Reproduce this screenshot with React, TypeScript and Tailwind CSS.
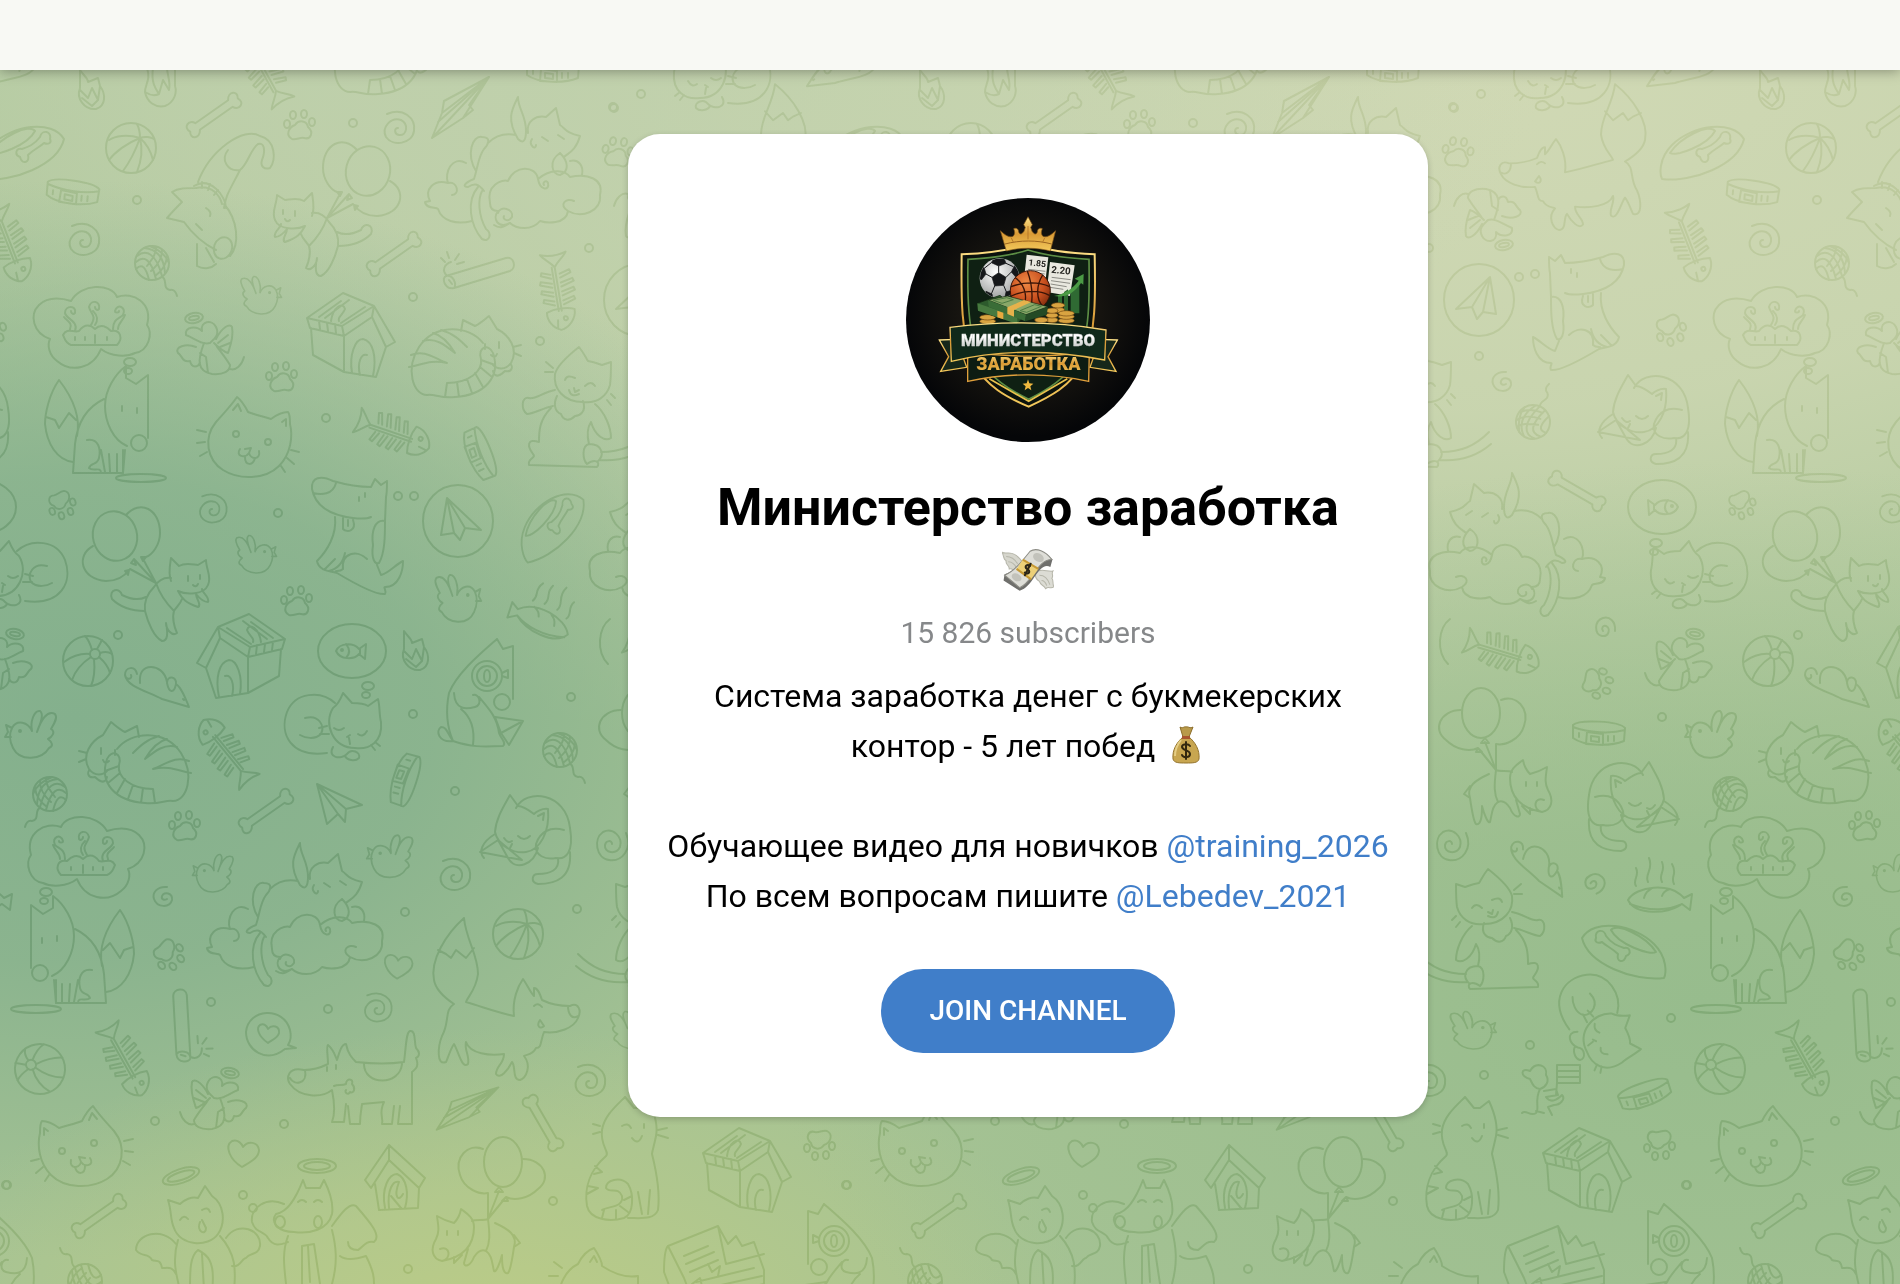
import React from 'react';

/* Line drawings for the wallpaper, each one drawn around its own centre */
const motifs: Record<string, React.ReactNode> = {
  dot: <circle r="4" />,
  bone: <path d="M-20 -4C-23 -11 -33 -8 -29 0C-34 6 -25 12 -20 4L20 4C23 11 33 8 29 0C34 -6 25 -12 20 -4Z" />,
  paw: (
    <>
      <path d="M-7 13C-14 9 -10 1 -4 -1C0 -7 8 -5 9 1C15 6 12 14 5 12C1 11 -2 14 -7 13Z" />
      <ellipse cx="-12" cy="-2" rx="3" ry="4" />
      <ellipse cx="-6" cy="-11" rx="3" ry="4" />
      <ellipse cx="5" cy="-12" rx="3" ry="4" />
      <ellipse cx="13" cy="-4" rx="3" ry="4" />
    </>
  ),
  spiral: <path d="M-12 -14C4 -21 17 -10 15 3C13 16 -6 19 -13 9C-18 -1 -8 -11 2 -8C10 -4 8 8 0 7C-5 6 -5 0 -1 0" />,
  swirl: <path d="M4 -10C-6 -11 -11 -4 -9 2C-6 11 7 11 9 3C10 -4 1 -6 -1 -1C-2 2 1 4 4 2" />,
  ball: (
    <>
      <circle r="25" />
      <circle cx="7" cy="-7" r="5" />
      <path d="M4 -11C2 -18 0 -22 -3 -25M9 -12C12 -17 13 -19 14 -21M12 -8C18 -10 21 -9 24 -7M2 -7C-8 -8 -18 -4 -24 1M3 -4C-6 2 -13 10 -16 19M6 -2C7 8 6 18 3 25M11 -4C18 2 21 8 22 12" />
    </>
  ),
  beachBall: (
    <>
      <circle r="25" />
      <path d="M9 -10C-4 -14 -16 -12 -22 -8M9 -10C-4 -5 -16 4 -22 12M9 -10C4 4 -2 15 -8 23M9 -10C12 2 10 14 6 24M9 -10C16 -4 20 4 22 12M9 -10C14 -12 20 -11 23 -9M9 -10C9 -16 8 -20 6 -24" />
    </>
  ),
  collar: (
    <path d="M-26 -8C-20 -14 20 -12 26 -5L25 8C10 14 -15 13 -26 5ZM-26 -6C-10 0 12 1 26 -3M-12 -1L4 1L4 12L-13 11ZM-8 3L0 4L0 9L-8 8ZM9 3v5M15 3v5M-20 0v4" />
  ),
  fishbone: (
    <>
      <path d="M-24 0C-30 -4 -33 -10 -38 -13C-35 -4 -35 4 -38 13C-33 10 -30 4 -24 0L20 -1M-24 3L20 2" />
      <path d="M-17 -4L-20 -14L-17 -15L-13 -4M-8 -4L-11 -16L-8 -17L-4 -4M1 -4L-2 -16L1 -17L5 -4M10 -4L7 -15L10 -16L14 -4M-17 5L-20 14L-17 15L-13 5M-8 5L-11 16L-8 17L-4 5M1 5L-2 16L1 17L5 5M10 5L7 15L10 16L14 5" />
      <path d="M20 -14C31 -14 38 -5 39 2C36 10 28 15 20 14C17 6 17 -6 20 -14ZM37 5L29 4" />
      <circle cx="28" cy="-4" r="2" />
    </>
  ),
  yarn: (
    <>
      <circle r="17" />
      <path d="M-15 -7C-6 -14 4 -10 10 13M-16 -1C-8 -8 -1 -4 4 16M-16 6C-10 0 -6 4 -3 17M-8 -15C4 -14 12 -6 13 10M-2 -17C8 -13 14 -8 17 0M-5 3C2 -6 4 -10 4 -16M-1 8C8 0 10 -6 10 -13M3 13C10 8 14 2 15 -6M10 14C16 16 10 26 18 27C22 26 24 29 25 33" />
    </>
  ),
  bird: (
    <>
      <path d="M-20 -6C-15 -15 -4 -12 0 -3C-2 -12 2 -24 8 -23C12 -20 9 -12 5 -2C9 -14 15 -24 23 -20C26 -16 22 -10 19 -5C24 -2 20 3 16 5C20 8 22 12 17 14C10 26 -12 28 -19 14C-22 8 -23 0 -20 -6L-26 -9L-24 -2L-27 3L-21 3" />
      <circle cx="-12" cy="-3" r="1" />
    </>
  ),
  plane: <path d="M-22 -19L23 2L7 6L6 19L-1 11L-12 21ZM-22 -19L-1 11M-22 -19L7 6" />,
  dart: <path d="M28 -31L-17 -7L-19 5L-29 30L2 10L12 2L8 -3ZM28 -31L-19 5M28 -31L-23 14M28 -31L-29 30M28 -31L2 10" />,
  mouse: (
    <path d="M-20 -13C-22 -22 -32 -20 -32 -12C-31 -6 -24 -8 -26 -12M-32 -12C-30 0 -10 4 5 12L32 20C28 10 24 0 19 -3C20 -11 10 -12 10 -4C12 6 17 7 19 -3M10 -5C8 -16 0 -20 -6 -20C-14 -20 -18 -14 -17 -4M26 12l1 1" />
  ),
  balloonCat: (
    <>
      <ellipse cx="-31" cy="-39" rx="22" ry="25" transform="rotate(-15 -31 -39)" />
      <path d="M-20 -60C-6 -76 14 -66 14 -42C14 -30 6 -20 0 -18M-53 -29C-70 -20 -66 4 -40 6C-30 6 -22 2 -17 -5M-12 -16L10 8M-4 -18L10 8M-16 -6L10 8M-12 -16l-3 4l5 2zM-17 -5l-4 1l3 4zM0 -18l-5 0l2 4z" />
      <path d="M25 6C22 -2 24 -10 25 -17L33 -9C40 -13 48 -10 52 -10L60 -15C60 -6 66 2 62 10C58 20 40 20 32 16M25 3C18 2 12 6 8 12C0 20 -2 28 -1 36M32 16C36 24 40 28 52 32C56 30 50 24 50 19M50 19C54 24 58 27 62 27C64 22 56 18 56 14M10 8C14 20 22 30 28 36C26 42 28 52 31 58C26 62 20 54 20 48C22 58 22 66 16 66C8 62 2 48 -1 36C-18 36 -28 30 -34 24C-38 14 -26 12 -24 20C-16 24 -8 26 0 22M28 36C30 32 34 30 36 24" />
      <path d="M42 1v5M54 0v4M47 10q3 3 5 -1" />
    </>
  ),
  catFace: (
    <>
      <path d="M-12 -39C-18 -30 -26 -22 -33 -14C-46 2 -42 24 -26 34C-10 44 16 44 30 30C42 18 44 0 41 -12C41 -18 41 -22 39 -24C32 -24 26 -20 22 -17C12 -20 4 -22 -1 -24C-4 -30 -8 -36 -12 -39ZM-16 -26L-11 -32L-8 -25M33 -14L37 -17L37 -10" />
      <path d="M-9 13C-14 20 -4 23 0 17C2 24 12 24 10 15M-4 13L2 12L0 17M-4 21C-4 30 4 30 6 22M-43 -4L-52 -6M-44 6L-52 7M-42 16L-49 20M42 14L50 16M38 22L45 28M32 30L36 36" />
      <circle cx="-13" cy="-2" r="3" />
      <circle cx="19" cy="6" r="3" />
    </>
  ),
  sleepCat: (
    <path d="M2 -23C-12 -36 -38 -34 -46 -14C-54 8 -42 32 -6 27M0 -18C6 -22 8 -28 10 -33L19 -23C26 -23 32 -22 35 -20L45 -27C47 -20 46 -12 48 -4C50 16 36 24 22 22C0 22 -10 -2 0 -18ZM-28 -8C-14 -12 -8 0 -12 8C-18 14 -28 12 -33 9M-14 2L-6 0M-13 8L-4 8M1 2Q6 6 11 2M25 8Q30 12 34 5M14 11L17 9M16 12L17 18M0 21C-6 32 8 34 14 28C18 22 28 26 26 32C22 36 14 34 12 30M38 19L42 24M42 16L47 20" />
  ),
  thought: (
    <>
      <ellipse cx="-2" cy="0" rx="6" ry="4" />
      <ellipse cx="-4" cy="9" rx="4" ry="3" />
    </>
  ),
  stripedCat: (
    <path d="M18 -14C4 -32 -30 -34 -46 -10C-60 12 -52 38 -38 38C-32 36 -24 42 -10 40C20 38 36 20 28 -4C24 -14 12 -10 16 2C18 14 4 26 -18 26L-20 40M-8 25L-6 40M2 22L7 36M10 16L18 30M15 10L27 20M16 3L30 8M-54 -2C-40 -8 -30 2 -18 6C-34 2 -44 8 -56 10M-42 -16C-30 -20 -20 -12 -10 -4C-16 -14 -24 -22 -32 -24M-24 -27C-12 -24 -4 -16 2 -10M-4 -26L-2 -37L10 -31C16 -34 20 -38 24 -41L32 -28C44 -22 54 -8 46 6C40 14 32 12 28 8M20 -13v5M34 -15v6M26 -2q4 4 6 -1M28 14C30 22 36 18 40 14C48 16 48 8 45 7M48 -10L56 -12M49 -4L56 -1" />
  ),
  foxSit: (
    <>
      <path d="M-38 -40C-48 -26 -52 -6 -52 4C-50 24 -40 40 -24 42M-38 -40C-24 -22 -16 -4 -20 16M-51 -3L-42 0L-38 8L-28 -7L-21 0M7 -21C-12 -12 -20 6 -22 24L-24 53L26 53L28 30M30 26C16 20 8 2 8 -14C8 -30 18 -46 29 -54L29 -42L39 -36L51 -45L51 18" />
      <path d="M-10 20C2 18 4 30 2 38C0 46 -6 42 -8 48C-4 52 4 46 4 53M4 30L8 52M12 34L13 52M20 34L20 52M26 30L26 53" />
      <circle cx="42" cy="23" r="8" />
      <path d="M25 -14v5M40 -12v5" />
    </>
  ),
  dish: <ellipse rx="25" ry="4" />,
  cloud: (
    <path d="M-22 -24C-12 -42 18 -42 24 -28C40 -34 60 -22 54 0C60 8 56 26 42 28C34 32 18 32 8 24C0 44 -22 48 -36 36C-44 30 -46 20 -43 14C-60 8 -64 -10 -54 -20C-44 -30 -28 -26 -22 -24ZM-18 6C-14 -4 -27 -6 -28 -12C-28 -20 -16 -20 -18 -12C-20 -10 -22 -12 -22 -14M-23 4C-20 -2 -26 -4 -29 -8M-2 0C4 -10 -2 -10 -4 -18C-2 -26 8 -24 6 -16C4 -14 2 -16 2 -18M2 0C6 -6 4 -10 0 -14M20 4C20 -6 26 -6 30 -10C34 -18 24 -22 22 -14C22 -12 26 -12 26 -14M25 4C25 -2 30 -4 32 -10M-30 10C-26 2 -20 8 -14 6C-8 -2 -2 0 2 4C8 -2 14 2 18 6C28 4 30 14 24 20L-22 20C-28 18 -28 14 -30 10ZM-18 12v3M-8 12v3M2 10v8M14 12v3" />
  ),
  cloudCat: (
    <path d="M-22 28C-26 10 -10 4 -4 6C2 -10 24 -10 26 4C40 -8 54 -4 58 2C76 -2 92 4 88 20C90 36 70 44 56 36C54 50 34 48 28 46C20 56 4 54 -2 48C-14 54 -20 44 -14 36C-20 36 -22 32 -22 28ZM26 4C28 16 38 16 36 8C34 4 30 8 32 10M-14 38C-12 30 2 34 0 42C-4 48 -10 44 -8 41M56 36C46 30 54 22 62 26M-46 -12C-60 -20 -68 -2 -64 8C-78 4 -88 14 -82 26L-87 27C-86 34 -76 32 -74 34C-70 46 -56 50 -40 46M-64 8C-54 6 -52 20 -60 20M-18 50C-12 54 -8 52 -2 48M-36 -4C-46 -20 -40 -40 -30 -38C-20 -38 -24 -30 -28 -26C-34 -18 -34 -8 -38 4C-48 8 -50 12 -44 12C-38 8 -34 8 -28 16M-24 -32C-16 -40 -6 -42 4 -40M-34 12C-46 26 -42 50 -30 64C-22 68 -20 58 -26 54C-34 40 -34 24 -30 16M16 -42C14 -54 24 -60 34 -58L44 -67L48 -50C54 -46 54 -42 68 -39C64 -24 56 -22 52 -18M6 -36C-6 -56 0 -66 6 -78C6 -66 14 -60 14 -44C14 -32 10 -32 6 -36M48 -22C36 -14 40 0 48 0C58 -4 56 -14 48 -22M58 -14C66 -16 72 -10 70 0M20 -36C16 -30 24 -24 24 -30M30 -38L36 -34M46 -40L52 -36" />
  ),
  house: (
    <path d="M-8 -42L-44 -17L-9 -9L23 -29ZM-44 -17L-41 -7L-7 1L21 -18L23 -29M-9 -9L-7 1M-40 -7L-38 20L-7 37L-7 1M-7 37L25 42L35 12M23 -29L44 7L35 12L21 -18M1 38C-2 20 4 4 12 4C22 6 26 22 22 41M9 40C6 28 10 18 16 20M-32 -18L-10 -34M-26 -17L-2 -35M-20 -14C-18 -28 -8 -34 -6 -26C-8 -20 -14 -18 -12 -14M-4 -16L14 -28M-10 -12L2 -20M-32 -14L-31 -6M-24 -12L-23 -4M-16 -11L-15 -2" />
  ),
  angelMouse: (
    <>
      <ellipse cx="-16" cy="-25" rx="9" ry="5" transform="rotate(-10 -16 -25)" />
      <ellipse cx="-16" cy="-25" rx="5" ry="2" transform="rotate(-10 -16 -25)" />
      <path d="M-24 -8C-26 -16 -14 -18 -8 -12C-10 -22 2 -24 6 -16C10 -8 4 -4 0 0C-8 2 -14 -4 -24 -8ZM6 -4C12 -16 20 -20 22 -16C24 -6 20 4 18 10C12 8 8 4 4 0M8 0L18 -8M10 4L20 0M-14 4C-24 0 -36 4 -32 10C-28 12 -28 20 -20 18C-18 26 -12 24 -10 20M-6 0C-12 16 -14 28 2 31C14 32 20 28 20 22C14 12 8 6 6 2M20 26C26 28 32 22 34 14M-4 14L-10 10M-4 14L-2 30" />
    </>
  ),
  happyCat: (
    <path d="M-40 -46C-40 -36 -40 -30 -39 -23C-36 -12 -26 -4 -12 -6C8 -6 18 -20 16 -34C14 -42 6 -50 -8 -61C-12 -56 -14 -52 -17 -47C-24 -46 -28 -44 -31 -43ZM-12 -7C-16 4 -8 8 -4 8C2 14 8 12 10 6C16 4 18 -4 14 -12M16 -18C28 -16 36 -8 42 -10C50 -12 50 2 44 6C38 6 28 0 18 -2M20 0C32 12 32 24 32 34C44 30 44 38 38 46C34 50 44 50 42 57L-26 59C-30 54 -24 50 -16 56M-24 -4C-34 4 -40 20 -40 30C-34 34 -24 28 -20 14C-16 20 -16 28 -18 36C-32 36 -34 48 -26 54M-18 36C-10 38 -12 52 -16 56M-30 44C-50 44 -64 38 -78 24M-28 52C-50 54 -66 48 -80 36M-24 -22Q-20 -28 -14 -22M-4 -30Q4 -34 6 -28M-8 -18L-4 -16L-3 -20M-8 -14Q0 -10 2 -18M18 -40L25 -46M18 -36L26 -36M-40 -14L-44 -10M-36 -8L-40 -3" />
  ),
  sitDog: (
    <>
      <path d="M-30 -54C-30 -46 -30 -42 -29 -38L-28 -14M-30 -54L-24 -50L-18 -56L-14 -48C0 -48 10 -50 24 -54C36 -60 46 -58 45 -46C42 -30 28 -20 4 -17C-4 -16 -10 -16 -14 -18M21 -52C24 -40 36 -40 44 -42M4 -15C0 -4 10 -2 14 -6L14 -17M9 -15v6M-28 -14C-18 -16 -14 -4 -16 10C-14 24 -18 30 -22 28C-28 18 -28 0 -28 -14M22 -18C20 0 30 16 40 26C38 36 28 36 20 38M12 18C14 28 20 34 28 36M22 24L32 34M-10 24C0 14 16 18 14 34C18 38 24 34 20 38C0 50 -20 60 -28 59C-30 56 -26 52 -28 52C-42 52 -46 36 -46 26C-38 30 -32 38 -24 40L-20 30" />
      <path d="M-8 -42v4M-2 -38v4" />
    </>
  ),
  foxStand: (
    <path d="M-42 -82C-60 -66 -76 -40 -72 -20C-70 -8 -58 0 -52 4M-42 -82C-40 -60 -28 -46 -28 -26C-30 -10 -38 -4 -40 2M-68 -50L-60 -46L-55 -42L-50 -50L-40 -42L-32 -52M-40 2C-20 8 -10 12 8 16C6 0 12 -14 17 -21C22 -14 24 -8 28 -4L28 -12C32 -12 34 -6 36 0C44 4 56 6 64 6C72 2 76 10 72 18C68 28 52 34 38 32C34 42 36 48 30 48C26 56 20 54 18 56M62 6C62 14 66 20 72 16M18 56C26 66 20 78 14 80C6 80 10 66 6 62C2 70 -6 80 -10 74C-10 66 -2 64 -2 54C-16 56 -36 54 -40 42C-42 50 -36 56 -38 64C-44 70 -48 50 -52 44C-56 50 -58 58 -60 62C-70 66 -68 46 -64 36C-56 22 -62 10 -52 4M28 6Q32 2 36 7M34 20C30 26 34 30 38 26Z" />
  ),
  foxScope: (
    <>
      <path d="M16 -54C0 -40 -24 -20 -32 0C-36 20 -34 34 -28 48C-42 50 -46 38 -40 34C-34 34 -34 40 -28 48C-10 54 0 54 22 53C26 50 20 46 18 40M16 -54L22 -44L32 -47L32 6M-2 4C8 16 16 24 18 40M-27 0C-26 18 -14 16 -6 14C2 12 -2 0 -8 2M-20 16C-10 24 -6 36 -8 52M14 24L42 28L28 52L20 40ZM20 40L42 28" />
      <circle cx="21" cy="9" r="8" />
      <circle cx="6" cy="-17" r="15" />
      <circle cx="6" cy="-17" r="10" />
      <ellipse cx="6" cy="-17" rx="3" ry="6" />
      <path d="M21 -20l6 -3v8l-6 -2" />
    </>
  ),
  curledCat: (
    <path d="M-10 -30C0 -50 40 -46 44 -10C48 14 40 22 30 20C20 22 8 18 10 6C14 -6 24 -12 38 -8M44 14C46 40 30 46 12 46C4 44 6 36 12 36C24 36 34 32 32 20M-16 -43C-22 -32 -30 -20 -31 -6C-28 8 -12 16 0 14C14 12 24 -6 22 -29C16 -30 10 -26 8 -24C0 -30 -4 -32 -8 -32ZM-31 -4C-44 4 -48 14 -42 20M-46 14L-4 22L-28 2ZM-28 2L-18 20M-18 20C-10 34 8 26 12 10M-22 0Q-18 6 -14 3M-8 -2Q-2 4 4 -2M-14 6L-16 10M12 -22l6 -3l-1 7" />
  ),
  balloonDog: (
    <>
      <ellipse cx="-15" cy="-43" rx="19" ry="25" />
      <path d="M-35 -46C-56 -46 -64 -26 -50 -16C-40 -6 -26 -4 -18 -8M5 -56C20 -62 34 -48 28 -30C24 -16 8 -10 0 -12M-11 -18l-4 5h8zM-18 -8L0 14M-11 -14L0 14M0 -12L0 14M-18 -8l-2 4l6 0z" />
      <path d="M14 22C14 12 22 8 27 4C28 10 30 14 34 18C42 16 46 14 51 11C50 20 48 26 52 34C58 44 56 54 46 56C24 52 14 40 14 22M48 44C38 40 36 54 46 56M0 14C4 16 12 14 16 16M0 14C-2 30 -2 38 2 46C6 44 10 46 14 52C18 62 24 62 24 58L20 44M-7 18C-20 24 -30 30 -26 42C-24 56 -22 66 -20 68C-14 70 -14 56 -14 50C-12 58 -8 68 -6 66C-4 58 -4 50 2 46M-26 30L-32 38L-26 42M26 50L34 58L34 52M30 26v4M41 26v4" />
    </>
  ),
  standDog: (
    <>
      <path d="M-26 -14C-26 -22 -28 -32 -26 -33C-20 -28 -18 -20 -17 -18C-14 -28 -12 -34 -8 -34C-6 -24 -2 -20 2 -16C20 -14 36 -14 50 -16C52 -30 52 -46 56 -47C62 -48 60 -36 62 -30C66 -26 66 -22 62 -20C66 -10 60 -8 58 -6L58 46L44 46L46 28M-26 -14C-34 -10 -42 -8 -50 -8C-66 -12 -68 0 -64 6C-54 20 -32 20 -22 12C-20 22 -18 34 -22 44L-10 44L-8 26M-6 28L-4 46L6 46C6 36 8 28 8 26L30 24C24 36 30 40 28 46L38 46L40 28M10 -14C10 8 46 8 48 -14M-49 -8C-46 6 -60 8 -64 0" />
      <path d="M-20 8C-16 6 -12 8 -8 6C-8 0 0 0 -2 6C2 10 0 16 -4 14C-6 18 -10 14 -8 12M-27 -11v4M-18 -13v4" />
    </>
  ),
  tabby: (
    <path d="M1 -63C-8 -54 -20 -44 -22 -30C-24 -14 -14 -8 -18 -4C-34 10 -40 28 -37 46C-34 60 -14 62 0 58C10 54 10 34 4 24C-4 16 -18 20 -18 28C-14 34 -6 26 -2 36C0 48 -16 46 -22 50M1 -63L10 -52L16 -52L25 -59C30 -48 34 -34 32 -24C30 -14 28 -8 28 -6C32 10 36 34 34 50C30 60 18 58 4 58M14 32L18 54M26 30L24 54M-29 6L-22 12L-30 14M-36 26L-26 28L-37 34M0 40L8 36M-4 46L4 52M-20 50L-22 58M-8 50L-8 59M-2 -34Q4 -38 7 -32M20 -36v4M8 -22Q14 -14 18 -24M-24 -34L-31 -36M-24 -28L-31 -26M34 -30L43 -32M34 -25L44 -22" />
  ),
  angelCat: (
    <>
      <ellipse cx="-17" cy="-54" rx="19" ry="7" transform="rotate(-18 -17 -54)" />
      <ellipse cx="-17" cy="-54" rx="14" ry="4" transform="rotate(-18 -17 -54)" />
      <path d="M-30 -30C-26 -18 -28 -10 -24 -2C-18 16 10 18 20 4C28 -8 26 -26 14 -34L7 -44L0 -32C-6 -34 -14 -30 -18 -26ZM-22 14C-36 -4 -62 4 -62 20C-56 28 -50 22 -46 30C-42 32 -38 28 -36 38C-30 38 -26 36 -22 44M28 8C40 -10 64 0 62 16C60 26 52 22 48 28C44 28 42 38 34 36M-20 10C-26 30 -22 44 -18 60M22 6C38 24 38 40 36 60M-8 60C-8 40 -8 26 0 20C8 24 18 30 14 60M4 24L6 60M-18 -10Q-14 -16 -10 -11M4 -20Q10 -24 12 -18M2 -8C-2 2 8 6 8 -2L4 -10" />
    </>
  ),
  angelDog: (
    <>
      <ellipse cx="7" cy="-56" rx="19" ry="7" />
      <ellipse cx="7" cy="-56" rx="13" ry="4" />
      <path d="M-7 -42C-14 -24 -22 -10 -34 -8C-40 0 -32 10 -16 10C0 12 18 8 22 -8C24 -20 18 -34 14 -42L10 -34L-4 -34ZM-26 -18C-44 -26 -60 -14 -58 0C-54 12 -46 8 -42 16C-36 26 -28 22 -22 20M22 4C32 -10 40 -20 46 -16C60 0 72 14 64 20C56 18 52 26 48 28C42 28 38 26 38 20M30 34C38 40 50 36 56 34C64 50 64 56 64 62M-22 14C-28 30 -26 44 -24 62M22 8C26 24 28 40 22 62M-8 62L-8 24L4 22L10 62M-2 24L0 60M-12 -20Q-8 -24 -4 -20M4 -20Q8 -24 12 -20" />
      <ellipse cx="-30" cy="0" rx="5" ry="6" />
      <ellipse cx="8" cy="0" rx="4" ry="6" />
    </>
  ),
  frontHouse: (
    <path d="M-6 -33L-30 2L-24 10L-6 -18L24 10L30 0ZM-6 -33L-6 -18M-20 6L-16 32L23 30L24 10M-10 30C-14 10 -6 -4 2 -4C12 0 14 16 10 30M-6 30C-8 12 -2 2 4 4M-4 18L6 30M4 4C-2 20 4 24 8 16" />
  ),
  circlePlane: (
    <>
      <ellipse rx="35" ry="36" />
      <path d="M-11 -23L23 9L7 7L2 19L-4 12L-17 14ZM-11 -23L-4 12M-11 -23L7 7" />
    </>
  ),
  circleFish: (
    <>
      <ellipse rx="34" ry="27" />
      <path d="M-16 0C-12 -9 2 -8 7 -2L14 -7L13 8L7 3C2 9 -12 9 -16 0ZM-6 -7C-2 -2 -2 3 -6 7M8 -2v5" />
      <circle cx="-10" cy="-1" r="1" />
    </>
  ),
  steamFish: (
    <path d="M-32 10C-24 -4 10 -8 24 8L32 4L30 20L22 14C8 24 -24 26 -32 10ZM-30 14C-10 22 10 20 22 14M-16 8C-14 0 -12 2 -8 -2M2 6C4 0 8 0 10 -1M-24 -4C-28 -10 -20 -14 -24 -22M-12 -8C-16 -16 -6 -20 -11 -32M2 -8C-2 -16 6 -18 2 -28M14 -6C10 -14 18 -16 12 -26" />
  ),
  bowl: (
    <path d="M-42 -12C-30 -32 10 -26 30 -6C44 8 42 24 40 28C10 32 -36 14 -42 -12ZM-13 -20C-8 -28 22 -14 32 2C26 6 -6 -6 -13 -20M-28 -12C-30 -20 -20 -22 -18 -14C-12 -6 -6 -4 0 -2C6 -4 8 4 2 6C0 14 -8 12 -6 4C-12 -2 -18 -4 -22 -8C-26 -6 -30 -8 -28 -12Z" />
  ),
  popcorn: (
    <path d="M-12 -20C-8 -14 -4 -12 -4 -8L6 -12L8 -4C14 4 14 16 4 19C-8 20 -16 8 -12 -2ZM-12 0L-4 8L0 -2L6 10L8 -4M-10 8L0 16L6 10" />
  ),
  egg: <path d="M-14 -20C-10 -8 -16 -4 -16 4C-14 14 -6 20 4 18C14 14 16 4 14 -2L14 -22M-8 -20C-10 -6 -6 0 -2 6L2 -8L8 2C10 -6 6 -14 6 -20M-16 4C-10 8 -6 8 -2 6" />,
  heart: <path d="M-2 13C-14 6 -20 -8 -12 -13C-6 -15 -2 -10 -1 -7C4 -14 14 -12 15 -4C15 4 6 8 -2 13Z" />,
  heartBubble: (
    <>
      <path d="M15 15C-4 30 -24 16 -24 -2C-22 -26 14 -28 20 -4C22 4 20 8 18 11L26 14L15 15" />
      <path d="M-2 9C-12 2 -14 -6 -10 -9C-6 -11 -3 -8 -2 -5C2 -10 10 -8 9 -1C8 4 2 6 -2 9Z" />
    </>
  ),
  firecracker: (
    <path d="M-33 2L27 -16C35 -18 38 -6 31 -3L-25 14C-34 16 -38 4 -33 2C-26 0 -22 10 -25 14M-32 2C-38 -4 -34 -10 -28 -12M-30 -16L-32 -22M-24 -14L-20 -20M-22 -10L-15 -12M-34 -12L-38 -16M-30 6l3 4" />
  ),
  hangingDog: (
    <>
      <path d="M-22 -18C-10 -50 24 -74 40 -64C56 -60 56 -40 50 -32C44 -30 40 -34 42 -40C46 -50 44 -58 38 -56C30 -50 28 -36 20 -30C8 -28 0 -40 8 -50M20 -30C10 -10 6 -6 4 8M-26 -14C-10 -24 6 -4 6 8M-24 -12C-8 -16 0 -4 2 4M-18 -18v6M-10 -16l-2 6M-2 -10l-4 5M-24 -12C-34 -12 -42 -12 -48 -8L-38 2C-44 8 -48 12 -53 18L-36 22C-26 36 -16 44 -4 50M4 4C18 20 20 44 10 56M-23 44L-23 66C-16 70 -8 68 -4 64M-14 48L-6 62" />
      <ellipse cx="3" cy="48" rx="9" ry="11" transform="rotate(20 3 48)" />
      <path d="M-24 24l6 6M-14 8q6 4 4 8" />
    </>
  ),
  flagMouse: (
    <path d="M-20 -12C-30 -14 -30 -24 -20 -20C-14 -30 -2 -26 -4 -16C0 -10 -4 -4 -10 -2C-16 -2 -18 -8 -20 -12ZM7 -26L30 -26L30 -8L7 -8ZM7 -20h23M7 -14h23M7 -8L6 4M-6 0L6 -2L8 4L-4 6M-10 -2C-16 10 -10 18 -14 22C-20 26 -24 18 -28 22M-4 6C0 12 6 10 12 4C16 8 10 14 4 14L-2 16L2 24M-14 20L-6 22" />
  ),
  box: (
    <path d="M-46 -18L4 -38L14 -20L22 -28L28 -18L40 -22L50 6L50 40L-38 40L-50 8C-50 0 -50 -14 -46 -18ZM-46 -18L-30 14L-20 40M4 -38L12 0L50 -10M-30 -8L-6 -18M-28 0L0 -12M-24 8L4 -4M-18 18L40 4M-16 26L48 12M-14 34L50 20M-6 0L-2 8L6 2L4 12M-22 20l8 -6l2 8" />
  ),
  catTop: <path d="M-36 40C-36 20 -28 6 -16 0C-12 -8 -6 -14 0 -16C4 -10 8 -4 8 2C20 10 32 14 44 12L44 30M-4 -2l4 -6l3 6M-32 4l-8 -6M-36 12h-9" />,
  ring: <path d="M10 -23C-2 -14 -4 10 8 22" />,
};

type Placement = [name: string, x: number, y: number, rotate?: number, scaleX?: number, scaleY?: number];

/* One repeat of the wallpaper is 840 wide */
const placements: Placement[] = [
  ['mouse', 842, 72, 10, -1], ['popcorn', 92, 90], ['egg', 161, 88], ['fishbone', 264, 70, 60, -1], ['stripedCat', 388, 54], ['collar', 553, 70],
  ['dart', 461, 108], ['bone', 214, 115, -35], ['paw', 299, 126], ['dot', 353, 123], ['dot', 137, 200], ['dot', 614, 108],
  ['dot', 413, 297], ['dot', 326, 418], ['dot', 540, 341], ['dot', 589, 248], ['spiral', 399, 128], ['bowl', 22, 151, 0, -1],
  ['beachBall', 131, 148], ['collar', 73, 192, 5], ['hangingDog', 220, 200], ['balloonCat', 337, 210, 0, -1], ['cloudCat', 512, 175],
  ['paw', 617, 153, 10], ['fishbone', 10, 244, 70], ['spiral', 84, 240], ['yarn', 152, 263], ['bone', 394, 254, -35],
  ['firecracker', 479, 274], ['fishbone', 558, 291, 82], ['bird', 260, 295, 0, -0.8, 0.8], ['cloud', 93, 325], ['thought', 132, 362],
  ['angelMouse', 210, 343], ['house', 351, 335], ['stripedCat', 465, 357], ['paw', 281, 378], ['foxSit', 97, 420], ['dish', 141, 478],
  ['catFace', 249, 436], ['fishbone', 393, 433, 20], ['collar', 480, 454, 65], ['happyCat', 571, 408, 0, -1],
  ['paw', 62, 504, 160, 0.9, 0.9], ['spiral', 213, 509, 0, 0.9, 0.9], ['dot', 278, 513], ['dot', 398, 496], ['dot', 414, 496],
  ['sitDog', 357, 535, 0, -1], ['circlePlane', 458, 521], ['bowl', 552, 524, -20, -0.9, 1], ['balloonCat', 146, 575],
  ['sleepCat', 19, 574, 0, -1], ['bird', 255, 554, 0, -0.8, 0.8], ['bird', 457, 598, 0, -0.9, 1], ['steamFish', 543, 612, 25, -1],
  ['paw', 296, 602], ['cloudCat', 678, 551, 0, -1], ['house', 241, 656, 0, -1], ['circleFish', 352, 651], ['thought', 370, 686],
  ['popcorn', 416, 651], ['foxScope', 481, 693], ['ball', 88, 661], ['dot', 118, 635], ['dot', 413, 714], ['dot', 571, 697],
  ['dot', 455, 791], ['mouse', 157, 687], ['angelMouse', -1, 659, 0, -1], ['sleepCat', 333, 726], ['bird', 32, 734],
  ['stripedCat', 135, 763, 0, -1], ['fishbone', 226, 752, 232], ['collar', 405, 780, 105], ['yarn', 560, 750], ['yarn', 50, 794, 0, -1],
  ['bone', 266, 811, -35], ['plane', 339, 803], ['paw', 184, 827], ['curledCat', 526, 838], ['cloud', 85, 855, 0, -1],
  ['thought', 48, 892], ['bird', 214, 873, 0, 0.8, 0.8], ['bird', 391, 856, 0, 0.9, 0.9], ['spiral', 455, 875], ['spiral', 612, 845, 90],
  ['cloudCat', 294, 921], ['foxSit', 82, 950, 0, -1], ['dish', 36, 1009], ['swirl', 163, 897], ['paw', 169, 954, 140],
  ['heart', 399, 967, 0, 0.9, 0.9], ['dot', 405, 912], ['dot', 577, 909], ['dot', 211, 1002], ['dot', 328, 1009], ['dot', 155, 1121],
  ['dot', 284, 1124], ['dot', 243, 1195], ['dot', 253, 1208], ['dot', 553, 1201], ['dot', 408, 1269], ['dot', 7, 1185],
  ['beachBall', 518, 934], ['foxStand', 506, 1000], ['firecracker', 181, 1026, 70, -1], ['heartBubble', 270, 1034],
  ['spiral', 378, 1008, 0, 0.9, 0.9], ['ball', 40, 1069, 250], ['fishbone', 125, 1060, 62], ['angelMouse', 214, 1098, 0, -1],
  ['standDog', 354, 1078], ['dart', 468, 1109, 6, 1, 0.8], ['spiral', 590, 1081], ['catFace', 81, 1145, 0, -1], ['bone', 543, 1123, 60],
  ['heart', 244, 1154], ['angelCat', 198, 1230], ['angelDog', 310, 1222], ['frontHouse', 395, 1178], ['balloonDog', 488, 1205, 0, -1],
  ['bone', 99, 1216, -35], ['yarn', 85, 1281, 180], ['catTop', 594, 1264], ['tabby', 624, 1160],
  ['dot', 641, 94], ['dot', 613, 107], ['sleepCat', 722, 76, 0, -1], ['foxStand', 733, 158, 0, -1, 0.9], ['angelMouse', 648, 220, 180],
  ['circlePlane', 639, 300, 0, -1], ['dot', 679, 277], ['dot', 695, 274], ['sitDog', 739, 311], ['paw', 831, 329, 160],
  ['dot', 639, 356], ['swirl', 662, 382], ['yarn', 693, 422, 240], ['curledCat', 804, 418],
  ['bone', 737, 491, 30], ['circleFish', 822, 507, 0, -1], ['thought', 818, 543], ['swirl', 765, 627, 90], ['ring', 600, 642],
  ['fishbone', 662, 652, 18], ['paw', 757, 682, 110], ['balloonDog', 656, 756], ['collar', 759, 733], ['dot', 822, 717],
  ['curledCat', 793, 805, 0, -1], ['mouse', 698, 868, 18], ['swirl', 755, 883, 150], ['steamFish', 820, 890], ['happyCat', 656, 930],
  ['bowl', 784, 950], ['bird', 632, 1030, 0, -0.9, 0.8], ['sleepCat', 756, 1022, 62], ['dot', 831, 1018], ['dot', 690, 1045], ['dot', 644, 1075],
  ['flagMouse', 710, 1091], ['collar', 805, 1094, -22], ['house', 747, 1170], ['paw', 820, 1144, 180], ['dot', 846, 1185], ['box', 714, 1264],
  ['foxScope', 840, 1258, 0, -1],
];

const Doodles: React.FC = () => (
  <>
    {placements.map(([name, x, y, rotate = 0, sx = 1, sy = 1], i) => (
      <g key={i} transform={`translate(${x} ${y}) rotate(${rotate}) scale(${sx} ${sy})`}>
        {motifs[name]}
      </g>
    ))}
  </>
);

const Wallpaper: React.FC = () => (
  <div className="absolute inset-0 bg-[#a6c394]" aria-hidden="true">
    <div className="absolute inset-0 bg-[radial-gradient(50%_42%_at_90%_78%,#97bc8d_0%,#97bc8d00_100%),radial-gradient(32%_24%_at_26%_104%,#bccc86_0%,#bccc8600_100%),radial-gradient(42%_42%_at_4%_56%,#84b08d_0%,#84b08dcc_45%,#84b08d00_100%),radial-gradient(60%_48%_at_22%_0%,#bfd0ac_0%,#bfd0ac00_100%),radial-gradient(85%_62%_at_76%_4%,#d1d9b5_0%,#d1d9b5cc_45%,#d1d9b500_100%)]" />
    <svg className="absolute inset-0 h-full w-full opacity-35 mix-blend-soft-light">
      <defs>
        <pattern id="doodles" width="840" height="1284" patternUnits="userSpaceOnUse">
          <g id="doodle-tile" fill="none" stroke="#000" strokeWidth="2" strokeLinecap="round" strokeLinejoin="round">
            <Doodles />
          </g>
          <use href="#doodle-tile" x="-840" />
          <use href="#doodle-tile" x="840" />
        </pattern>
      </defs>
      <rect width="100%" height="100%" fill="url(#doodles)" />
    </svg>
  </div>
);

const ChannelLogo: React.FC = () => (
  <svg viewBox="18 24 732 732" className="size-[244px] rounded-full" role="img" aria-label="Министерство заработка">
    <defs>
      <radialGradient id="night" cx="50%" cy="48%" r="50%">
        <stop offset="0" stopColor="#2a241b" />
        <stop offset="0.6" stopColor="#15130f" />
        <stop offset="1" stopColor="#050608" />
      </radialGradient>
      <linearGradient id="gold" x1="0" y1="0" x2="0" y2="1">
        <stop offset="0" stopColor="#ffe48a" />
        <stop offset="0.5" stopColor="#d99a35" />
        <stop offset="1" stopColor="#f3c95c" />
      </linearGradient>
      <linearGradient id="silver" x1="0" y1="0" x2="0" y2="1">
        <stop offset="0.3" stopColor="#ffffff" />
        <stop offset="1" stopColor="#b9bcb9" />
      </linearGradient>
      <radialGradient id="basket" cx="40%" cy="30%" r="75%">
        <stop offset="0" stopColor="#f08a45" />
        <stop offset="0.6" stopColor="#c9501f" />
        <stop offset="1" stopColor="#7c2a0d" />
      </radialGradient>
      <radialGradient id="leather" cx="40%" cy="35%" r="70%">
        <stop offset="0" stopColor="#ffffff" />
        <stop offset="1" stopColor="#9a9c9c" />
      </radialGradient>
      <clipPath id="football">
        <circle cx="299" cy="265" r="59" />
      </clipPath>
    </defs>
    <rect x="18" y="24" width="732" height="732" fill="url(#night)" />

    {/* Shield */}
    <path d="M185 193C260 190 330 180 384 162C438 180 510 190 584 193C586 300 590 430 550 520C510 590 450 620 386 650C320 622 260 590 220 520C180 430 184 300 185 193Z" fill="#0b120d" stroke="url(#gold)" strokeWidth="6" />
    <path d="M204 208C280 204 334 196 384 180C434 196 500 204 567 208C568 300 572 430 534 505C500 565 440 600 386 628C330 600 272 565 238 505C202 430 202 300 204 208Z" fill="#0f2013" stroke="#5d8f45" strokeWidth="5" />
    <path d="M268 566L386 634L502 566" fill="none" stroke="#e8c24c" strokeWidth="5" />

    {/* Crown */}
    <path d="M319 183L301 122C314 134 326 142 336 140C344 138 346 126 341 116C350 112 356 118 356 126C360 136 366 132 372 124L376 112L371 104L384 80L397 104L392 112L396 124C402 132 408 136 412 126C412 118 418 112 427 116C422 126 424 138 432 140C442 142 454 134 467 122L451 183C410 172 360 172 319 183Z" fill="url(#gold)" stroke="#7c5218" strokeWidth="2" />
    <path d="M315 162C360 150 410 150 455 162" fill="none" stroke="#9a6420" strokeWidth="3" />
    <path d="M384 108V148M334 144L340 156M434 144L428 156" stroke="#b5792b" strokeWidth="3" />

    {/* Bet slips */}
    <g>
      <path d="M380 194L445 202L436 275L372 266Z" fill="#e9e8df" />
      <path d="M450 216L524 226L510 318L440 306Z" fill="#e9e8df" />
      <path d="M384 238L436 244M383 246L434 252M455 262L512 269M453 272L510 280M452 282L500 290M450 292L490 298" stroke="#8b8b84" strokeWidth="3" />
      <text x="385" y="226" transform="rotate(6 385 226)" className="font-['Roboto'] text-[26px] font-bold" fill="#23231f">1.85</text>
      <text x="453" y="248" transform="rotate(6 453 248)" className="font-['Roboto'] text-[29px] font-bold" fill="#23231f">2.20</text>
    </g>

    {/* Rising chart */}
    <path d="M474 340V316L486 312V370H474ZM492 306L504 298V370H492ZM512 300L538 276V370H512Z" fill="#2f6a33" />
    <path d="M462 318C490 312 515 300 536 272L524 266L551 252L550 284L543 279C520 312 495 324 462 318Z" fill="#4b9a45" />

    {/* Football */}
    <circle cx="299" cy="265" r="60" fill="url(#leather)" />
    <g clipPath="url(#football)" fill="#15171a" stroke="#15171a" strokeWidth="2">
      <path d="M276 262L296 248L318 262L311 286L284 288Z" />
      <path d="M282 205L312 205L318 220L296 228L274 218Z" />
      <path d="M345 224L362 250L350 264L334 246Z" />
      <path d="M238 240L252 232L258 252L244 270L236 262Z" />
      <path d="M258 304L276 312L280 330L250 316Z" />
      <path d="M318 306L338 300L330 322L314 326Z" />
      <path d="M296 248L296 228M276 262L258 252M318 262L334 246M311 286L320 308M284 288L274 312M318 220L340 230M274 218L254 234" fill="none" strokeWidth="3" />
    </g>

    {/* Basketball */}
    <circle cx="391" cy="302" r="60" fill="url(#basket)" stroke="#3a1407" strokeWidth="3" />
    <path d="M333 290C370 276 415 274 449 290M382 243C396 280 400 320 392 361M346 263C380 290 384 330 366 356M428 255C406 290 410 330 428 348M334 318C370 300 420 300 448 316" fill="none" stroke="#3a1407" strokeWidth="4" />

    {/* Coins */}
    <g fill="#d9a441" stroke="#6f4714" strokeWidth="2">
      <ellipse cx="263" cy="394" rx="24" ry="8" />
      <ellipse cx="263" cy="382" rx="24" ry="8" />
      <ellipse cx="474" cy="360" rx="20" ry="8" />
      <ellipse cx="474" cy="346" rx="20" ry="8" />
      <ellipse cx="456" cy="390" rx="18" ry="8" />
      <ellipse cx="456" cy="376" rx="18" ry="8" />
      <ellipse cx="456" cy="362" rx="18" ry="8" />
      <ellipse cx="499" cy="392" rx="24" ry="8" />
      <ellipse cx="499" cy="380" rx="24" ry="8" />
      <ellipse cx="499" cy="370" rx="24" ry="8" />
      <ellipse cx="424" cy="390" rx="20" ry="8" />
    </g>

    {/* Banknotes */}
    <path d="M232 340L300 316L372 378L352 402L234 362Z" fill="#2d5a2c" stroke="#10240f" strokeWidth="2" />
    <path d="M232 340L352 380L352 402L234 362Z" fill="#47793f" />
    <path d="M264 330L322 318L444 350L378 374Z" fill="#8aa868" stroke="#10240f" strokeWidth="2" />
    <path d="M264 330L378 374L376 394L266 350Z" fill="#3a6d37" />
    <path d="M378 374L444 350L440 374L376 394Z" fill="#244a25" />
    <path d="M322 352L372 330L394 336L342 360L342 380L322 372Z" fill="#e7b24b" />
    <path d="M292 362L310 368L310 388L292 382Z" fill="#e7a93e" />
    <path d="M280 331L320 323L340 329L306 340ZM360 362L404 344L424 349L380 367Z" fill="none" stroke="#4d7a43" strokeWidth="3" />

    {/* Ribbon */}
    <path d="M118 450L170 448L200 532L122 544L146 500ZM652 450L600 448L570 532L648 544L624 500Z" fill="#16271a" stroke="url(#gold)" strokeWidth="4" />
    <path d="M203 486C320 502 450 502 568 486L566 574C450 548 320 548 203 574Z" fill="#0d1c12" stroke="#e0a03c" strokeWidth="4" />
    <path d="M150 412C300 394 470 394 618 420L614 510C460 480 300 478 154 514Z" fill="#10291a" stroke="url(#gold)" strokeWidth="4" />
    <text x="384" y="468" textAnchor="middle" className="font-['Roboto'] text-[50px] font-black" fill="url(#silver)" stroke="#d4d6d4" strokeWidth="1">МИНИСТЕРСТВО</text>
    <text x="385" y="540" textAnchor="middle" className="font-['Roboto'] text-[54px] font-black" fill="url(#gold)">ЗАРАБОТКА</text>
    <path d="M384 568L388 580L400 581L391 589L394 601L384 594L374 601L377 589L368 581L380 580Z" fill="#f0b93f" />
  </svg>
);

const FlyingMoney: React.FC = () => (
  <svg viewBox="0 0 100 80" className="inline-block h-[42px] w-[52px]" role="img" aria-label="💸">
    <path d="M0 6C8 10 14 4 24 10C32 14 38 22 42 30L32 44C24 44 20 36 14 38C14 30 6 30 8 22C2 20 4 12 0 6Z" fill="#d6d6cd" stroke="#b6b6aa" strokeWidth="2" />
    <path d="M8 14C16 14 24 18 30 28M12 24C18 24 24 28 28 36" fill="none" stroke="#b6b6aa" strokeWidth="2" />
    <path d="M100 72C94 78 90 70 84 76C80 68 74 70 72 62C66 58 62 52 66 44C74 36 88 44 98 42C94 48 100 50 96 56C100 60 96 66 100 72Z" fill="#dcdcd4" stroke="#b6b6aa" strokeWidth="2" />
    <path d="M72 50C80 50 88 56 92 68M76 60C80 60 84 64 86 70" fill="none" stroke="#b6b6aa" strokeWidth="2" />
    <path d="M54 6C66 -2 84 6 97 20L93 34C80 28 72 40 62 54C54 66 46 76 34 80L3 60L5 48C22 44 38 26 54 6Z" fill="#6f6f6c" />
    <path d="M54 4C66 -4 84 4 96 20C80 20 72 32 60 48C52 60 44 70 34 74L5 50C22 44 38 24 54 4Z" fill="#deded8" stroke="#8d8d86" strokeWidth="2" />
    <ellipse cx="70" cy="16" rx="11" ry="8" transform="rotate(30 70 16)" fill="#c2c2bb" />
    <ellipse cx="28" cy="54" rx="10" ry="7" transform="rotate(30 28 54)" fill="#c2c2bb" />
    <path d="M40 20L70 38L56 58L28 38Z" fill="#ecd078" />
    <path d="M40 20L70 38M28 38L56 58" stroke="#c79a35" strokeWidth="4" />
    <path d="M54 32C48 28 42 34 48 38C56 42 52 50 44 45M55 28L44 50" fill="none" stroke="#2c2618" strokeWidth="4" strokeLinecap="round" />
  </svg>
);

const MoneyBag: React.FC = () => (
  <svg viewBox="0 0 30 38" className="mr-1 ml-2 inline-block h-[38px] w-[30px] align-[-7px]" role="img" aria-label="💰">
    <path d="M9 1C12 3 13 0 15 1C17 0 19 3 22 1L18 11H12Z" fill="#b99a4a" stroke="#8b6d2a" />
    <path d="M12 11H18C24 16 29 24 28 33C27 37 22 37 15 37C8 37 3 37 2 33C1 24 6 16 12 11Z" fill="#c8a650" stroke="#94742d" />
    <path d="M10 14C6 19 4 24 4 30" stroke="#e6cf86" strokeWidth="2" fill="none" />
    <path d="M11 10H19V13H11Z" fill="#a9562f" />
    <path d="M19 20C17 17 11 18 11 21C12 25 19 24 19 28C19 32 12 32 11 29M15 16V33" fill="none" stroke="#33280f" strokeWidth="2" strokeLinecap="round" />
  </svg>
);

const App: React.FC = () => {
  return (
    <div className="relative flex min-h-screen flex-col overflow-hidden font-['Roboto',sans-serif] text-black">
      <Wallpaper />

      <header className="relative h-[70px] bg-[#f8f9f4] shadow-[0_1px_12px_rgba(0,0,0,0.35)]" />

      <main className="relative flex justify-center pt-16 pb-16 pl-[156px]">
        <section className="flex w-[800px] flex-col items-center rounded-[32px] bg-white px-10 py-16 text-center shadow-[0_2px_6px_rgba(0,0,0,0.2)]">
          <ChannelLogo />
          <h1 className="mt-[35px] text-[52px] leading-[62px] font-bold">
            Министерство заработка
            <span className="flex h-[62px] items-center justify-center">
              <FlyingMoney />
            </span>
          </h1>
          <p className="mt-3 text-[30px] leading-10 text-[#86888a]">15 826 subscribers</p>
          <div className="mt-[18px] text-[32px] leading-[50px] whitespace-nowrap">
            <p>
              Система заработка денег с букмекерских
              <br />
              контор - 5 лет побед <MoneyBag />
            </p>
            <p className="mt-[50px]">
              Обучающее видео для новичков{' '}
              <a href="#training_2026" className="text-[#407ec9]">@training_2026</a>
              <br />
              По всем вопросам пишите{' '}
              <a href="#Lebedev_2021" className="text-[#407ec9]">@Lebedev_2021</a>
            </p>
          </div>
          <button type="button" className="mt-12 h-[84px] rounded-full bg-[#407ec9] px-12 text-[28px] font-medium text-white">
            JOIN CHANNEL
          </button>
        </section>
      </main>
    </div>
  );
};

export default App;
